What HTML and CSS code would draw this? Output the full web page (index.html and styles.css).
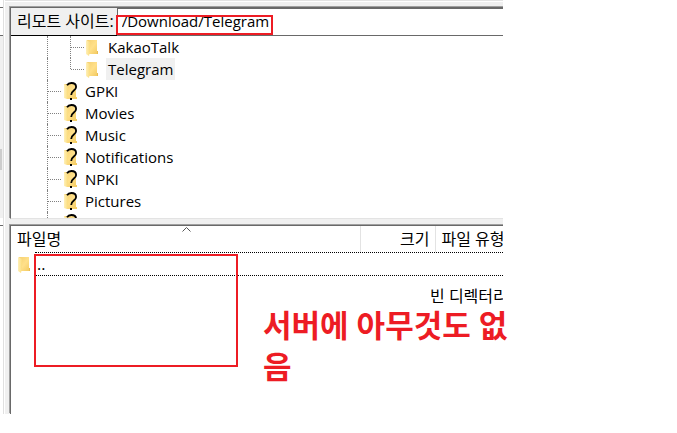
FILE: index.html
```html
<!DOCTYPE html>
<html lang="ko">
<head>
<meta charset="utf-8">
<title>리모트 사이트</title>
<link rel="stylesheet" href="styles.css">
</head>
<body>
<svg class="defs" aria-hidden="true">
  <defs>
    <linearGradient id="front" x1="0" y1="0" x2="1" y2="0"><stop offset="0" stop-color="#fff0b8"/><stop offset="1" stop-color="#fbdc7c"/></linearGradient>
    <linearGradient id="back" x1="0" y1="0" x2="1" y2="1"><stop offset="0" stop-color="#f5d071"/><stop offset=".5" stop-color="#ffe08a"/><stop offset="1" stop-color="#f2c95f"/></linearGradient>
    <symbol id="folder" viewBox="0 0 13 17">
      <path d="M1 1h10v12h1v2H3z" fill="url(#back)"/>
      <path d="M0 1l4 2v9l-1 5-3-2z" fill="url(#front)"/>
      <path d="M11 12h1v3h-1z" fill="#e9bd55"/>
    </symbol>
    <symbol id="unknown" viewBox="0 0 14 19">
      <path d="M0 2h12v13h1v2H3z" fill="url(#back)"/>
      <path d="M0 2l4 2v9l-1 4-3-1z" fill="url(#front)"/>
      <path d="M3 3.200C4 1.600 5.500 1 7.400 1c3 0 4.700 1.500 4.700 3.900 0 3.900-4.900 3.400-4.900 8.100" fill="none" stroke="#000" stroke-width="1.800"/>
      <path d="M6 16h2v2H6z"/>
    </symbol>
  </defs>
</svg>
<main class="client">
  <aside class="neighbour">
    <div class="neighbour-path"></div>
    <div class="neighbour-scroll"><div class="thumb"></div></div>
    <div class="neighbour-list"></div>
  </aside>
  <div class="remote">
    <section class="pane tree-pane">
      <form class="path">
        <label for="site">리모트 사이트:</label>
        <input id="site" type="text" value="/Download/Telegram">
        <span class="mark path-mark"></span>
      </form>
      <ul class="tree">
        <li><i class="rail"></i><i class="rail inner"></i><i class="branch"></i><svg class="folder"><use href="#folder"/></svg><span>KakaoTalk</span></li>
        <li class="last"><i class="rail"></i><i class="rail inner"></i><i class="branch"></i><svg class="folder"><use href="#folder"/></svg><span class="selected">Telegram</span></li>
        <li><i class="rail"></i><i class="branch"></i><svg class="unknown"><use href="#unknown"/></svg><span>GPKI</span></li>
        <li><i class="rail"></i><i class="branch"></i><svg class="unknown"><use href="#unknown"/></svg><span>Movies</span></li>
        <li><i class="rail"></i><i class="branch"></i><svg class="unknown"><use href="#unknown"/></svg><span>Music</span></li>
        <li><i class="rail"></i><i class="branch"></i><svg class="unknown"><use href="#unknown"/></svg><span>Notifications</span></li>
        <li><i class="rail"></i><i class="branch"></i><svg class="unknown"><use href="#unknown"/></svg><span>NPKI</span></li>
        <li><i class="rail"></i><i class="branch"></i><svg class="unknown"><use href="#unknown"/></svg><span>Pictures</span></li>
        <li><i class="rail"></i><i class="branch"></i><svg class="unknown"><use href="#unknown"/></svg><span>Podcasts</span></li>
      </ul>
    </section>
    <section class="pane list-pane">
      <table class="files">
        <thead>
          <tr>
            <th class="name">파일명<svg class="sort" viewBox="0 0 9 5"><path d="M.5 4.500l4-4 4 4" fill="none" stroke="#555"/></svg></th>
            <th class="size">크기</th>
            <th class="kind">파일 유형</th>
          </tr>
        </thead>
        <tbody>
          <tr><td colspan="3"><div class="entry"><svg class="folder"><use href="#folder"/></svg><span class="focus">..</span></div></td></tr>
        </tbody>
      </table>
      <p class="empty">빈 디렉터리</p>
      <span class="mark list-mark"></span>
      <p class="note">서버에 아무것도 없음</p>
    </section>
  </div>
</main>
</body>
</html>
```
FILE: styles.css
```css
* { box-sizing: border-box; }
body {
  margin: 0;
  background: #fff;
  color: #000;
  font: 15px/22px "Open Sans", "Noto Sans CJK KR", sans-serif;
}
.defs { position: absolute; width: 0; height: 0; }
.client {
  display: grid;
  grid-template-columns: 5px 1fr;
  margin-right: 174px;
}
.neighbour {
  display: grid;
  grid-template-rows: 36px 189px 1fr;
  border-right: 1px solid #fff;
  box-shadow: inset -1px 0 #e0e0e0;
}
.neighbour-path {
  margin: 7px 1px 0 0;
  border-top: 1px solid #696969;
  border-bottom: 1px solid #696969;
}
.neighbour-scroll { margin: 0 1px 7px 0; padding-top: 113px; background: #f0f0f0; }
.thumb { width: 2px; height: 21px; background: #cdcdcd; }
.neighbour-list { margin-right: 1px; border-top: 1px solid #696969; }
.remote {
  min-width: 0;
  padding-left: 4px;
  border-top: 1px solid #e3e3e3;
  background: #f0f0f0;
  box-shadow: inset 0 1px #fff;
}
.pane {
  position: relative;
  margin-left: 1px;
  border-left: 1px solid #696969;
  border-top: 1px solid #696969;
  background: #fff;
  box-shadow: -1px -1px #a0a0a0, 0 -1px #a0a0a0;
}
.tree-pane { margin-top: 6px; border-bottom: 1px solid #e3e3e3; }
.path { position: relative; display: flex; height: 28px; }
.path label {
  padding: 0 3px 0 6px;
  border-bottom: 1px solid #000;
  background: #f0f0f0;
  font-size: 16px;
  line-height: 26px;
  white-space: nowrap;
}
.path input {
  flex: 1;
  min-width: 0;
  padding: 0 0 2px 4px;
  border: solid #696969;
  border-width: 1px 0 1px 1px;
  background: #fff;
  color: #000;
  font: inherit;
  outline: 0;
}
.mark { position: absolute; border: 2px solid #ed1c24; pointer-events: none; }
.path-mark { left: 105px; top: 7px; width: 157px; height: 20px; }
.tree {
  height: 182px;
  margin: 0;
  padding: 0;
  overflow: hidden;
  list-style: none;
}
.tree li { display: flex; align-items: center; height: 22px; }
.rail { width: 37px; height: 22px; border-right: 1px dotted #808080; }
.rail.inner { width: 23px; }
.last .inner { height: 11px; align-self: flex-start; }
.branch { width: 13px; border-top: 1px dotted #808080; }
.folder { flex: none; width: 13px; height: 17px; margin: 0 7px 0 2px; }
.unknown { flex: none; width: 14px; height: 19px; margin: 0 5px 0 3px; }
.tree span { padding: 0 2px; }
.selected { background: #f0f0f0; }
.list-pane { height: 189px; margin-top: 6px; }
.files { width: 100%; border-collapse: collapse; table-layout: fixed; font-size: 16px; }
.files th {
  position: relative;
  height: 26px;
  padding: 0 6px;
  overflow: hidden;
  border-right: 1px solid #e3e3e3;
  font-weight: 400;
  line-height: 22px;
  text-align: left;
  white-space: nowrap;
}
.files .size { width: 75px; padding: 0 5px; text-align: right; }
.files .kind { width: 68px; border: 0; }
.sort { position: absolute; left: 49%; top: 1px; width: 9px; height: 5px; }
.files td { padding: 0; }
.entry { display: flex; align-items: center; height: 24px; }
.entry .folder { margin: 0 4px 0 7px; }
.focus {
  flex: 1;
  height: 24px;
  padding-left: 2px;
  border: dotted #000;
  border-width: 1px 0;
}
.empty {
  margin: 9px 0 0;
  padding-left: 419px;
  overflow: hidden;
  font-size: 16px;
  white-space: nowrap;
}
.list-mark { left: 23px; top: 28px; width: 204px; height: 113px; }
.note {
  position: absolute;
  left: 252px;
  right: -8px;
  top: 79px;
  margin: 0;
  color: #ed1c24;
  font-size: 31px;
  font-weight: 700;
  line-height: 41px;
  word-break: break-all;
}
```
